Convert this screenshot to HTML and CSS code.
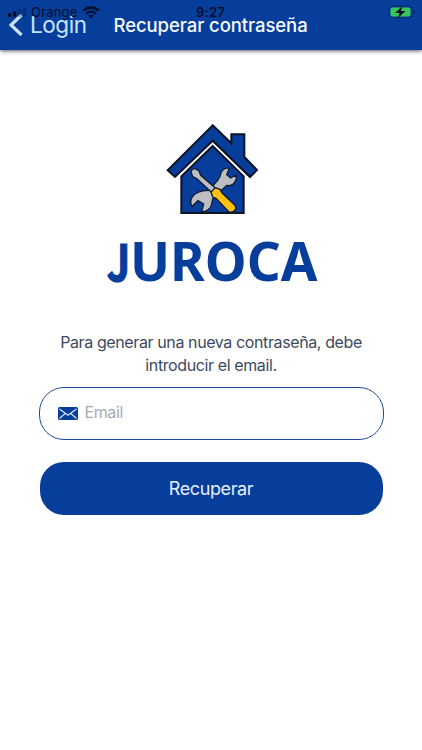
FILE: index.html
```html
<!DOCTYPE html>
<html lang="es">

<head>
    <meta charset="UTF-8">
    <meta name="viewport" content="width=device-width, initial-scale=1.0">
    <title>Recuperar contraseña</title>
    <link rel="stylesheet" href="styles.css">
</head>

<body>
    <!-- Navbar -->
    <header class="navbar">
        <a href="#" class="back">
            <svg class="back-icon" width="14" height="24" viewBox="0 0 14 24">
                <path d="M12.500 2L2 12L12.500 22" />
            </svg>
            <span class="back-text">Login</span>
        </a>
        <h1 class="navbar-title">Recuperar contraseña</h1>
    </header>

    <!-- Status bar -->
    <div class="status">
        <svg class="signal" width="19" height="10" viewBox="0 0 19 10">
            <rect x="0" y="6" width="3.5" height="4" rx="1" />
            <rect x="5" y="4" width="3.5" height="6" rx="1" />
            <rect class="weak" x="10" y="2" width="3.5" height="8" rx="1" />
            <rect class="weak" x="15" y="0" width="3.5" height="10" rx="1" />
        </svg>
        <span class="carrier">Orange</span>
        <svg class="wifi" width="18" height="13" viewBox="0 0 18 13">
            <path d="M1.2 4.6C5.6 .4 12.4 .4 16.8 4.6M4.1 7.6C6.9 5 11.1 5 13.9 7.6" />
            <path class="dot" d="M6.3 9.6C7.9 8.3 10.1 8.3 11.7 9.6L9 12.5Z" />
        </svg>
        <span class="time">9:27</span>
        <svg class="battery" width="28" height="14" viewBox="0 0 28 14">
            <rect class="case" x="1" y="1" width="23" height="12" rx="3.5" />
            <rect class="charge" x="2.5" y="2.5" width="20" height="9" rx="2" />
            <path class="tip" d="M25.5 5V9Q27 8.5 27 7Q27 5.500 25.500 5Z" />
            <path d="M14.500 1L7 8H11.500L10 13L17.500 6H13Z" />
        </svg>
    </div>

    <main class="container">
        <div class="logo">
            <svg class="logo-house" width="115" height="110" viewBox="0 0 345 330">
                <path class="house" d="M173 93L266 184V294H79V184Z" />
                <path class="house" d="M173 31L229 85V58H268V126L306 165L285 186L173 77L60 186L38 166Z" />
                <!-- wrench -->
                <path class="steel" d="M162 226C140 226 120 232 111 247C105 258 107 268 112 274L129 257L146 267L140 290C156 291 168 280 170 267C171 258 172 251 178 245L216 211C226 213 235 209 239 202C244 195 245 187 243 180L227 189L215 179L223 160C209 157 199 166 197 177C196 184 194 189 188 196Z" />
                <!-- screwdriver -->
                <path class="steel" d="M108 169Q113 160 121 161L132 168L137 181L182 220L171 233L125 191L113 185Z" />
                <path class="handle" d="M168 231L181 218L195 223L202 235L240 271Q245 278 240 286Q231 295 221 290L183 250L173 246Z" />
            </svg>
            <div class="logo-text"><span class="logo-j">J</span>UROCA</div>
        </div>

        <form class="form" id="recoverForm">
            <p class="info">Para generar una nueva contraseña, debe<br>introducir el email.</p>
            <label class="field">
                <svg class="mail" width="20" height="13" viewBox="0 0 20 13">
                    <rect width="20" height="13" rx="1.500" />
                    <path d="M1.500 2L10 8.300L18.500 2M1.500 11.500L7.200 6.500M18.500 11.500L12.800 6.500" />
                </svg>
                <input class="email" type="email" id="email" name="email" placeholder="Email">
            </label>
            <button class="send" type="submit">Recuperar</button>
        </form>
    </main>

    <script>
    document.getElementById('recoverForm').addEventListener('submit', function(event) {
        event.preventDefault();
    });
    </script>
</body>

</html>
```
FILE: styles.css
```css
body {
    font-family: Inter, "Liberation Sans", sans-serif;
    background-color: #ffffff;
    margin: 0;
    min-height: 100vh;
}

/* Navbar */
.navbar {
    display: flex;
    align-items: center;
    height: 50px;
    box-sizing: border-box;
    padding-left: 9px;
    background-color: #073e9b;
    box-shadow: 0 1px 4px rgba(0, 0, 0, 0.65);
}

.back {
    display: flex;
    align-items: center;
    gap: 7px;
    width: 104.5px;
    color: #c9e3ff;
    text-decoration: none;
}

.back-icon {
    fill: none;
    stroke: #c9e3ff;
    stroke-width: 3.2;
}

.back-text {
    font-size: 22.5px;
    line-height: 28px;
    letter-spacing: -0.45px;
}

.navbar-title {
    margin: 0;
    font-size: 18.5px;
    font-weight: 500;
    line-height: 24px;
    letter-spacing: -0.08px;
    color: #f5f9ff;
    white-space: nowrap;
}

/* Status bar lies over the navbar */
.status {
    position: absolute;
    top: 4px;
    left: 8px;
    right: 6px;
    height: 16px;
    display: flex;
    align-items: center;
    color: #03102c;
    fill: #03102c;
}

.weak {
    opacity: 0.3;
}

.carrier {
    margin-left: 4px;
    width: 47px;
    font-size: 13px;
    letter-spacing: 0.2px;
}

.wifi {
    margin-left: 4px;
}

.wifi path {
    fill: none;
    stroke: #03102c;
    stroke-width: 2.4;
}

.wifi .dot {
    fill: #03102c;
    stroke: none;
}

.time {
    margin-left: 96px;
    font-size: 13px;
    font-weight: 600;
    letter-spacing: 0.3px;
}

.battery {
    margin-left: auto;
}

.case {
    fill: #073e9b;
    stroke: #052b68;
}

.charge {
    fill: #35c759;
}

.tip {
    fill: #052b68;
}

/* Logo */
.container {
    display: flex;
    flex-direction: column;
    align-items: center;
    padding-top: 65px;
}

.logo {
    display: flex;
    flex-direction: column;
    align-items: center;
}

.logo-house {
    display: block;
    margin-left: 3px;
}

.house {
    fill: #073e9b;
    stroke: #0c1426;
    stroke-width: 6;
}

.steel {
    fill: #bdbec2;
    stroke: #101a30;
    stroke-width: 4;
}

.handle {
    fill: #fdc20f;
    stroke: #101a30;
    stroke-width: 4;
}

.logo-text {
    height: 64px;
    margin: 4px 0 1px 2px;
    font-family: "Noto Sans", sans-serif;
    font-size: 53px;
    font-weight: 700;
    line-height: 64px;
    color: #073e9b;
    white-space: nowrap;
}

.logo-j {
    display: inline-block;
    margin-left: -5px;
    font-family: "Noto Sans CJK JP", "Noto Sans", sans-serif;
    font-size: 50px;
    line-height: 60px;
    transform: scaleX(0.83);
    transform-origin: right;
    -webkit-text-stroke: 1.2px #073e9b;
}

/* Form */
.form {
    width: 345px;
    display: flex;
    flex-direction: column;
    align-items: center;
}

.info {
    margin: 37px 0 11px;
    font-size: 16px;
    line-height: 22.5px;
    letter-spacing: -0.39px;
    text-align: center;
    color: #3c4a60;
    white-space: nowrap;
}

.field {
    display: flex;
    align-items: center;
    width: 100%;
    height: 53px;
    box-sizing: border-box;
    padding: 0 20px 2px 18px;
    border: 1.5px solid #1f479f;
    border-radius: 25px;
}

.mail {
    margin-top: 2px;
    fill: #073e9b;
}

.mail path {
    fill: none;
    stroke: #d4e3fa;
    stroke-width: 1.2;
}

.email {
    flex: 1;
    min-width: 0;
    padding: 0 0 2px 7px;
    border: none;
    outline: none;
    background: none;
    font-family: inherit;
    font-size: 16px;
    letter-spacing: -0.4px;
}

.email::placeholder {
    color: #aaaaad;
}

.send {
    width: 343px;
    height: 53px;
    margin-top: 22px;
    padding: 0;
    border: none;
    border-radius: 24px;
    background-color: #073e9b;
    color: #e5f0ff;
    font-family: inherit;
    font-size: 18px;
    letter-spacing: -0.4px;
}
```
